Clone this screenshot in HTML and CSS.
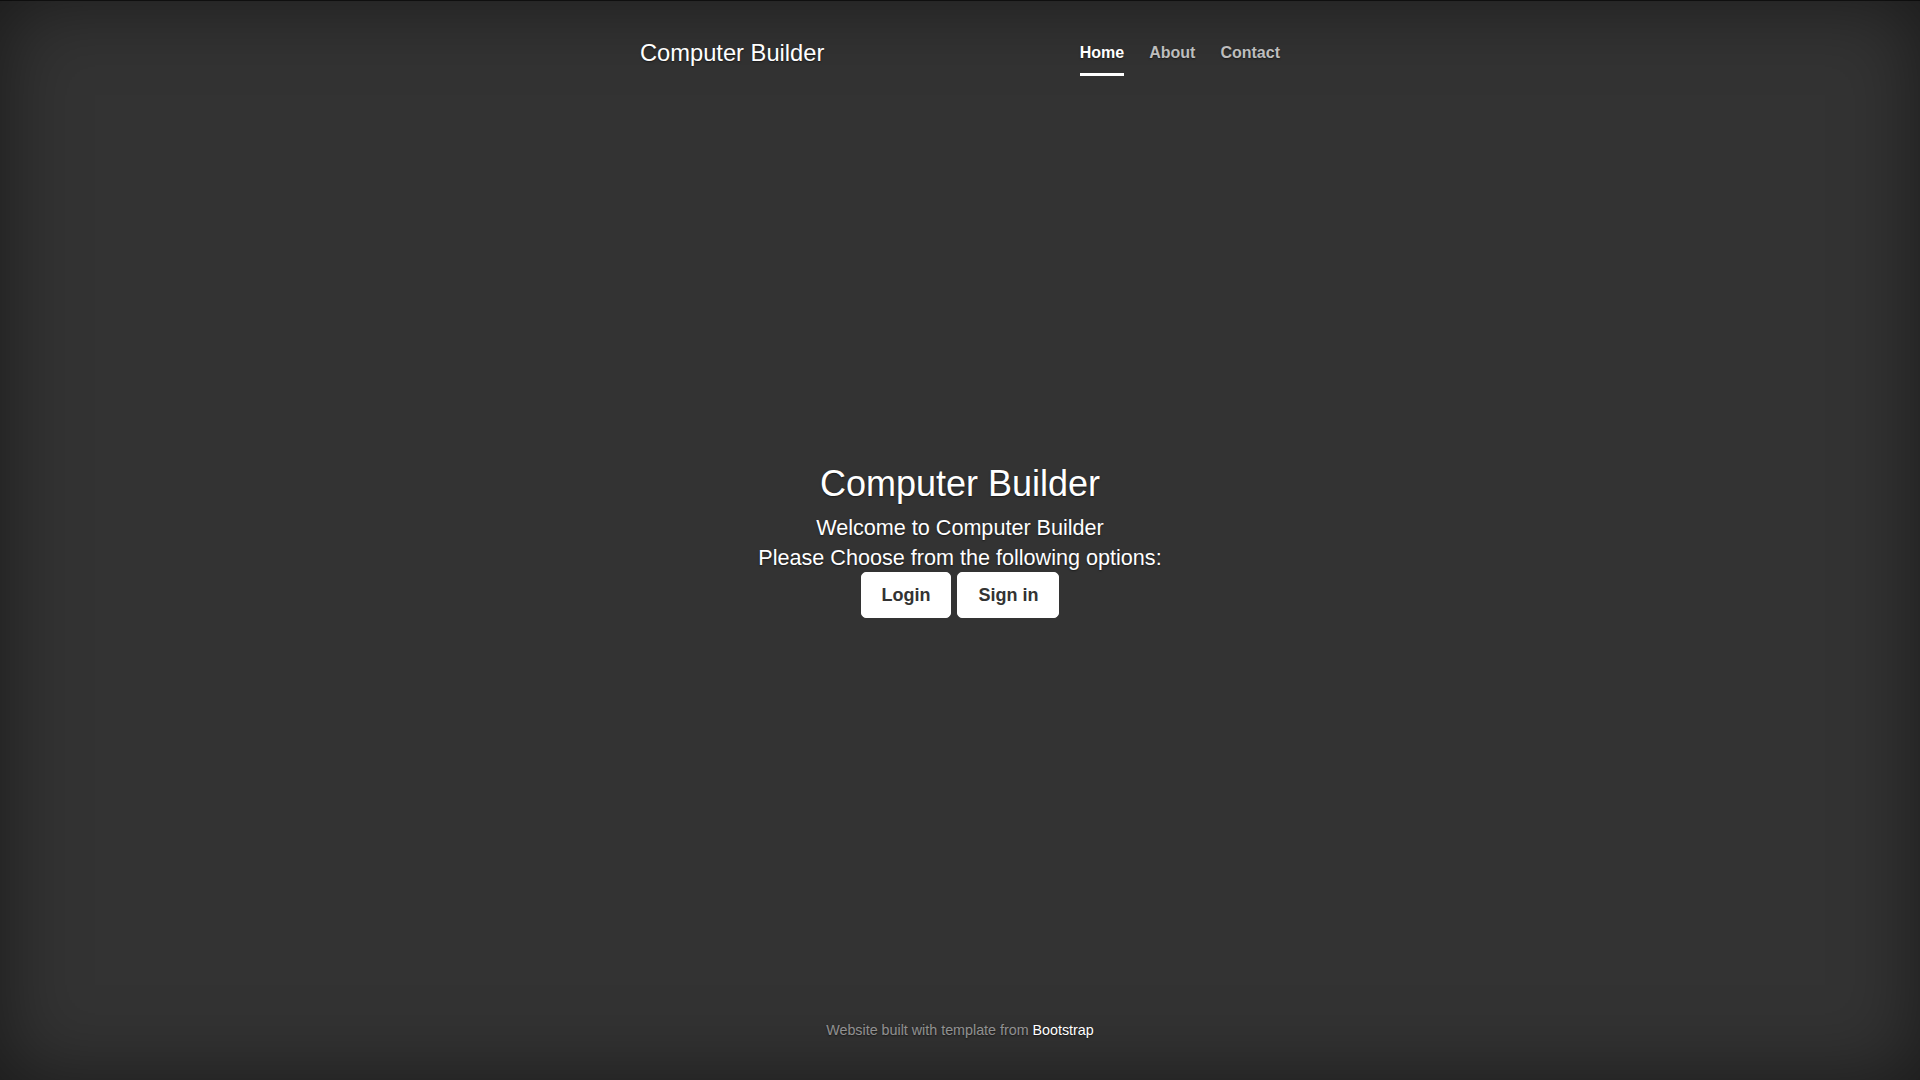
FILE: index.html
```html
<!DOCTYPE html>
<html lang="en">
<head>
<meta charset="utf-8">
<title>Computer Builder</title>
<link rel="stylesheet" href="styles.css">
</head>
<body>
<div class="cover">
  <header class="masthead">
    <h3 class="brand">Computer Builder</h3>
    <nav class="nav">
      <a class="nav-link active" href="#">Home</a>
      <a class="nav-link" href="#">About</a>
      <a class="nav-link" href="#">Contact</a>
    </nav>
  </header>
  <main class="hero">
    <h1 class="hero-title">Computer Builder</h1>
    <p class="lead">Welcome to Computer Builder</p>
    <p class="lead">Please Choose from the following options:</p>
    <div class="actions">
      <a class="btn" href="#">Login</a>
      <a class="btn" href="#">Sign in</a>
    </div>
  </main>
  <footer class="footer">
    <p class="footer-text">Website built with template from <a class="footer-link" href="#">Bootstrap</a></p>
  </footer>
</div>
</body>
</html>
```

FILE: styles.css
```css
html, body {
  height: 100%;
}
body {
  margin: 0;
  background-color: #333;
  color: #fff;
  font-family: "Liberation Sans", Arial, sans-serif;
  text-shadow: 0 0.05rem 0.1rem rgba(0, 0, 0, 0.5);
  box-shadow: inset 0 0 5rem rgba(0, 0, 0, 0.5), inset 0 1px 0 #151515;
  display: flex;
}
.cover {
  box-sizing: border-box;
  width: 100%;
  max-width: 672px;
  height: 100%;
  margin: 0 auto;
  padding: 16px;
  display: flex;
  flex-direction: column;
}
.masthead {
  flex: 1 1 0;
  display: flex;
  justify-content: space-between;
  align-items: flex-start;
  padding-top: 21px;
}
.brand {
  margin: 2px 0 0;
  font-size: 23.7px;
  line-height: 29px;
  font-weight: 400;
}
.nav {
  display: flex;
  gap: 25px;
}
.nav-link {
  display: block;
  padding: 4px 0 8px;
  font-size: 16px;
  line-height: 24px;
  font-weight: 700;
  color: #bdbdbd;
  text-decoration: none;
  border-bottom: 3px solid transparent;
}
.nav-link.active {
  color: #fff;
  border-bottom-color: #fff;
}
.hero {
  text-align: center;
  margin-bottom: 22px;
}
.hero-title {
  margin: 0 0 8px;
  font-size: 36px;
  line-height: 43px;
  font-weight: 400;
}
.lead {
  margin: 0;
  font-size: 21.6px;
  line-height: 30px;
}
.actions {
  display: flex;
  justify-content: center;
  gap: 6px;
  margin-top: -1px;
}
.btn {
  display: block;
  padding: 9px 20px;
  font-size: 18px;
  line-height: 26px;
  font-weight: 700;
  color: #333;
  background-color: #fff;
  border: 1px solid #fff;
  border-radius: 5px;
  text-decoration: none;
  text-shadow: none;
}
.footer {
  flex: 1 1 0;
  display: flex;
  flex-direction: column;
  justify-content: flex-end;
  align-items: center;
}
.footer-text {
  margin: 0 0 23px;
  font-size: 14.3px;
  line-height: 21px;
  color: rgba(255, 255, 255, 0.5);
}
.footer-link {
  color: #fff;
  text-decoration: none;
}
```
